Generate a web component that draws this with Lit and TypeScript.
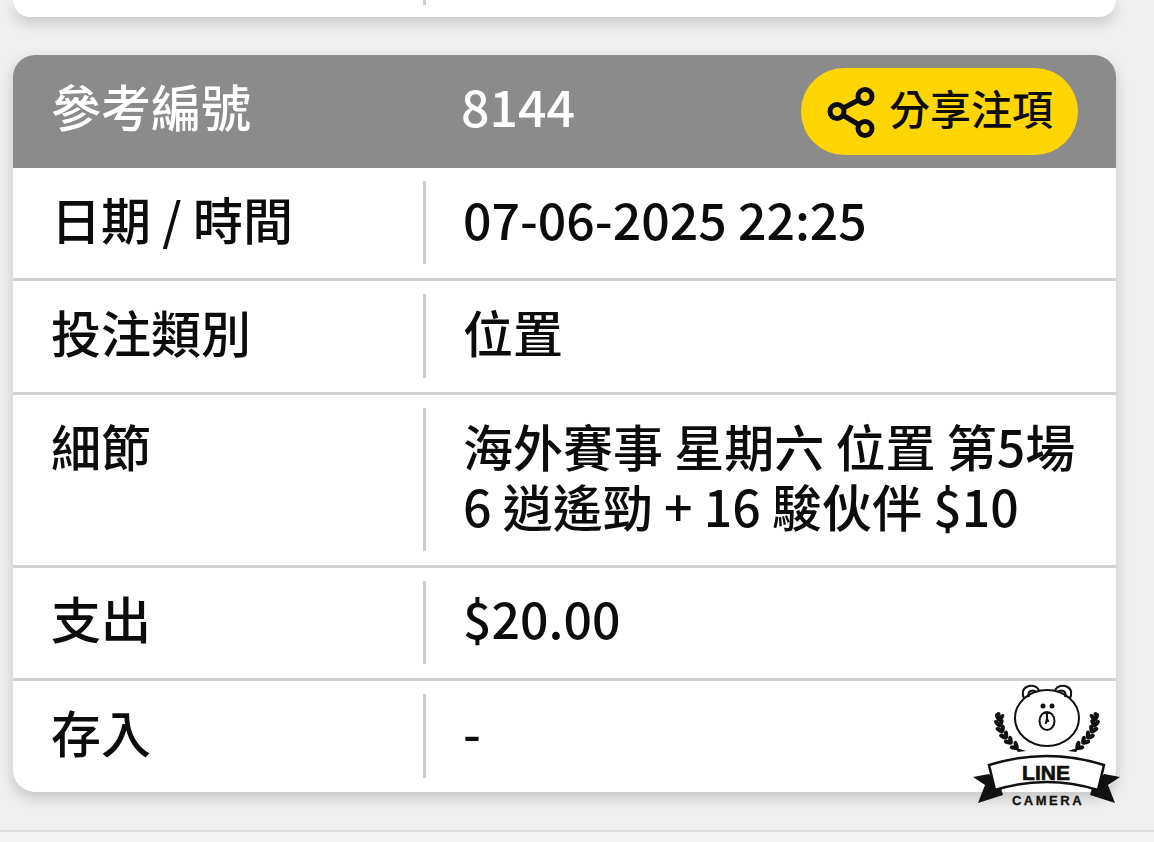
import { LitElement, html, css, svg } from "lit";
import { customElement } from "lit/decorators.js";

const rows: [string, unknown][] = [
  ["日期 / 時間", "07-06-2025 22:25"],
  ["投注類別", "位置"],
  ["細節", html`海外賽事 星期六 位置 第5場<br />6 逍遙勁 + 16 駿伙伴 $10`],
  ["支出", "$20.00"],
  ["存入", "-"],
];

const spine: [number, number, number][] = [
  [999, 720, 95],
  [999.5, 726, 80],
  [1002, 732, 65],
  [1006, 738, 55],
  [1011, 743, 45],
  [1017, 748, 38],
];

function wreath() {
  return svg`<g fill="#111">
    <circle cx="998.5" cy="714" r="2" />
    ${spine.map(
      ([x, y, a]) => svg`
        <ellipse cx=${x - 3} cy=${y} rx="4.4" ry="2.2" transform="rotate(${a - 30} ${x} ${y})" />
        <ellipse cx=${x + 3} cy=${y} rx="4.4" ry="2.2" transform="rotate(${a + 35 - 180} ${x} ${y})" />`
    )}
    <path d="M1014 747 1026 751 1018 752Z" />
  </g>`;
}

@customElement("app-root")
export class AppRoot extends LitElement {
  static styles = css`
    :host {
      display: block;
      width: 1154px;
      height: 842px;
      overflow: hidden;
      background: #f5f5f5;
      font-family: "Noto Sans CJK TC", "Noto Sans", sans-serif;
      color: #0c0c0c;
    }
    .page {
      display: flex;
      flex-direction: column;
      height: 832px;
      padding: 0 38px 0 13px;
      box-sizing: border-box;
      border-bottom: 2px solid #dcdcdc;
      background: #efefef;
    }
    .stub {
      height: 17px;
      flex: none;
      background: #fff;
      border-radius: 0 0 22px 22px;
      box-shadow: 0 6px 14px rgba(0, 0, 0, 0.16);
      padding-left: 410px;
    }
    .stub i {
      display: block;
      width: 3px;
      height: 5px;
      background: #cccccc;
    }
    .card {
      position: relative;
      margin-top: 38px;
      background: #fff;
      border-radius: 22px;
      box-shadow: 0 6px 14px rgba(0, 0, 0, 0.18);
    }
    .head {
      display: flex;
      align-items: center;
      height: 113px;
      background: #8b8b8b;
      border-radius: 22px 22px 0 0;
      color: #fff;
      font-size: 50px;
      font-weight: 500;
      line-height: 1;
    }
    .head .label {
      width: 410px;
      padding: 0 0 14px 38px;
      box-sizing: border-box;
    }
    .head .num {
      padding: 0 0 14px 38px;
      flex: 1;
    }
    .share {
      display: flex;
      align-items: center;
      gap: 12px;
      width: 277px;
      height: 87px;
      margin-right: 38px;
      padding-left: 28px;
      box-sizing: border-box;
      border-radius: 44px;
      background: #ffd503;
      color: #0c0c0c;
      font-size: 41px;
      font-weight: 500;
    }
    .share span {
      padding-bottom: 8px;
    }
    .share svg {
      width: 48px;
      height: 48px;
      flex: none;
      overflow: visible;
    }
    .row {
      display: flex;
      padding: 13px 0 14px;
      border-top: 3px solid #d0d0d0;
      font-size: 50px;
      font-weight: 500;
      line-height: 58px;
    }
    .row.first {
      border-top: 0;
    }
    .row .k {
      width: 410px;
      padding-left: 38px;
      box-sizing: border-box;
      flex: none;
    }
    .row .v {
      flex: 1;
      border-left: 3px solid #cccccc;
      padding-left: 37px;
      box-sizing: border-box;
      min-height: 83.4px;
    }
    .row.single .k,
    .row.single .v {
      display: flex;
      align-items: center;
      padding-bottom: 10px;
    }
    .row.multi {
      line-height: 60px;
    }
    .row.multi .k {
      padding-top: 7px;
    }
    .row.multi .v {
      padding-top: 7px;
      min-height: 143px;
    }
    .logo {
      position: absolute;
      left: 947px;
      top: 615px;
      width: 194px;
      height: 172px;
    }
    .logo text {
      font-family: "Liberation Sans", sans-serif;
      font-weight: 700;
      fill: #111;
      stroke: #111;
      text-anchor: middle;
    }
    .logo .line {
      font-size: 21px;
      stroke-width: 0.7px;
    }
    .logo .camera {
      font-size: 13px;
      letter-spacing: 2.5px;
      stroke-width: 0.3px;
    }
  `;

  render() {
    return html`<div class="page">
      <div class="stub"><i></i></div>
      <div class="card">
        <div class="head">
          <div class="label">參考編號</div>
          <div class="num">8144</div>
          <div class="share">
            <svg viewBox="0 0 48 48" fill="none" stroke="#0c0c0c" stroke-width="5">
              <circle cx="36" cy="8.500" r="7" />
              <circle cx="8" cy="23.500" r="7" />
              <circle cx="36" cy="40.500" r="7" />
              <path d="M14.500 20 29.500 12M14.500 27.500 29.500 36.500" />
            </svg>
            <span>分享注項</span>
          </div>
        </div>
        ${rows.map(
          ([k, v], i) => html`<div class="row ${i === 2 ? "multi" : "single"} ${i === 0 ? "first" : ""}">
            <div class="k">${k}</div>
            <div class="v">${v}</div>
          </div>`
        )}
        <svg class="logo" viewBox="960 670 194 172">
          <g fill="none" stroke="#111" stroke-width="2">
            <path d="M1024.500 699c-3-5-2-10 2-12 5-2.500 10-1 12.500 3" />
            <path d="M1029 697c-1-3-.5-5 1.500-6 2.500-1 5 0 6 1.500" />
            <path d="M1069.500 699c3-5 2-10-2-12-5-2.500-10-1-12.500 3" />
            <path d="M1065 697c1-3 .5-5-1.500-6-2.500-1-5 0-6 1.500" />
            <ellipse cx="1047" cy="718" rx="32" ry="28" />
            <ellipse cx="1047" cy="721" rx="7.500" ry="9" />
          </g>
          <circle cx="1043" cy="706" r="2.500" fill="#111" />
          <circle cx="1052" cy="706" r="2.500" fill="#111" />
          <path d="M1043.500 713h7M1047 713v6l-1.500 5M1047 719l1.500 3" fill="none" stroke="#111" stroke-width="2" />
          ${wreath()}
          <g transform="matrix(-1 0 0 1 2094 0)">${wreath()}</g>
          <path d="M989 774 973 777 985 785 978 803 1003 795 1000 785Z" fill="#111" />
          <path d="M1104 774 1120 777 1108 785 1115 803 1090 795 1093 785Z" fill="#111" />
          <path d="M989 765Q1047 747 1104 765L1098 790Q1047 774 995 790Z" fill="#fff" stroke="#111" stroke-width="2.500" />
          <text class="line" x="1046" y="780">LINE</text>
          <text class="camera" x="1048" y="805">CAMERA</text>
        </svg>
      </div>
    </div>`;
  }
}
